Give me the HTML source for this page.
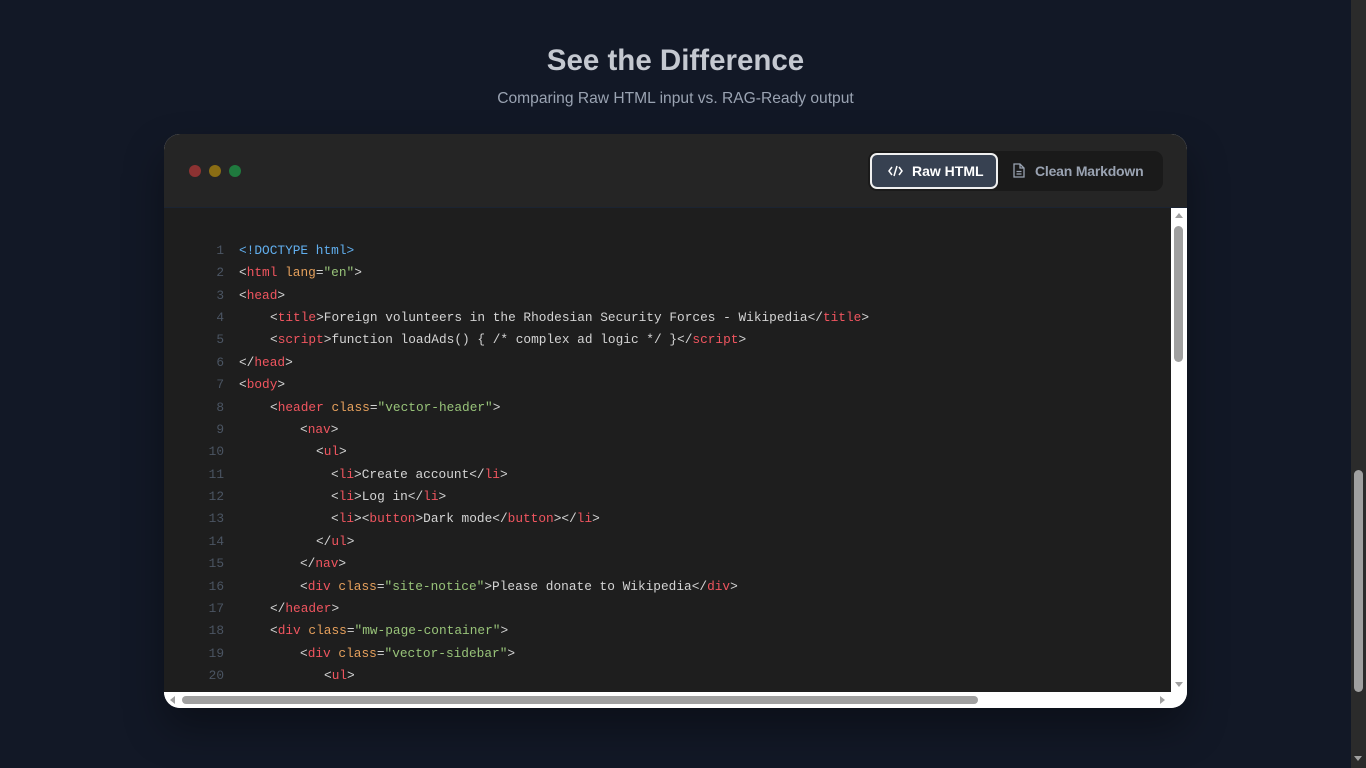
<!DOCTYPE html>
<html><head><style>
html,body{margin:0;padding:0;width:1366px;height:768px;overflow:hidden;background:#121826;font-family:"Liberation Sans",sans-serif}
h1{position:absolute;top:44px;left:0;width:1351px;text-align:center;margin:0;font-size:29.5px;color:#c4c8d0;font-weight:bold}
.sub{position:absolute;top:90px;left:0;width:1351px;text-align:center;font-size:15.6px;color:#9aa3b2}
.card{position:absolute;left:164px;top:134px;width:1023px;height:574px;border-radius:16px;background:#fff;overflow:hidden;box-shadow:0 20px 40px rgba(0,0,0,.35)}
.hdr{position:absolute;left:0;top:0;width:1023px;height:73px;background:#252525;border-bottom:1px solid #1b2433}
.dot{position:absolute;top:31px;width:12px;height:12px;border-radius:50%}
.tabs{position:absolute;left:704px;top:17px;width:295px;height:40px;background:#1a1a1a;border-radius:9px}
.t1{position:absolute;left:2px;top:2px;width:124px;height:32px;border:2px solid #f0f0f0;background:#374151;border-radius:7px;color:#fff;font-weight:bold;font-size:14px;line-height:32px}
.t2{position:absolute;top:4px;color:#9aa3b2;font-weight:bold;font-size:14px;line-height:32px;letter-spacing:-0.2px}
.code{position:absolute;left:0;top:74px;width:1007px;height:484px;background:#1e1e1e;overflow:hidden}
.ln{position:absolute;left:0;height:22px;font-family:"Liberation Mono",monospace;font-size:12.8px;line-height:22px;white-space:pre;color:#d4d4d4}
.n{position:absolute;width:60px;text-align:right;color:#4b5563}
.k{color:#f0555f}.a{color:#e5a05c}.s{color:#98c379}.d{color:#61afef}
.vs{position:absolute;left:1007px;top:74px;width:16px;height:484px;background:#fff}
.hs{position:absolute;left:0;top:558px;width:1023px;height:16px;background:#fff}
.pg{position:absolute;left:1351px;top:0;width:15px;height:768px;background:#2b2b2b}
</style></head><body>
<h1>See the Difference</h1>
<div class="sub">Comparing Raw HTML input vs. RAG-Ready output</div>
<div class="card">
<div class="hdr">
<div class="dot" style="left:25px;background:#8c3232"></div>
<div class="dot" style="left:45px;background:#8a6d14"></div>
<div class="dot" style="left:65px;background:#1f7a3e"></div>
<div class="tabs">
<div class="t1"><svg style="position:absolute;left:16px;top:9px" width="15" height="14" viewBox="0 0 15 14" fill="none" stroke="#fff" stroke-width="1.5"><path d="M4 3L1 7l3 4M11 3l3 4-3 4M9 2L6 12"/></svg><span style="position:absolute;left:40px">Raw HTML</span></div>
<svg style="position:absolute;left:145px;top:12px" width="12" height="15" viewBox="0 0 12 15" fill="none" stroke="#9aa3b2" stroke-width="1.3"><path d="M1 1h6l4 4v9H1z M7 1v4h4 M3.5 8.5h5 M3.5 11h5"/></svg>
<div class="t2" style="left:167px">Clean Markdown</div>
</div>
</div>
<div class="code" id="c"></div>
<div class="vs"><div style="position:absolute;left:4px;top:5px;border:4px solid transparent;border-bottom:5px solid #a0a0a0;border-top:0"></div><div style="position:absolute;left:3px;top:18px;width:9px;height:136px;border-radius:5px;background:#a0a0a0"></div><div style="position:absolute;left:4px;top:474px;border:4px solid transparent;border-top:5px solid #a0a0a0;border-bottom:0"></div></div>
<div class="hs"><div style="position:absolute;left:6px;top:4px;border:4px solid transparent;border-right:5px solid #a0a0a0;border-left:0"></div><div style="position:absolute;left:18px;top:4px;width:796px;height:8px;border-radius:4px;background:#a0a0a0"></div><div style="position:absolute;left:996px;top:4px;border:4px solid transparent;border-left:5px solid #a0a0a0;border-right:0"></div></div>
</div>
<div class="pg"><div style="position:absolute;left:3px;top:470px;width:9px;height:222px;border-radius:5px;background:#a0a0a0"></div><div style="position:absolute;left:3px;top:756px;border:4px solid transparent;border-top:5px solid #a0a0a0;border-bottom:0"></div></div>
<script>
var L=[
[0,'<span class="d">&lt;!DOCTYPE html&gt;</span>'],
[0,'&lt;<span class="k">html</span> <span class="a">lang</span>=<span class="s">"en"</span>&gt;'],
[0,'&lt;<span class="k">head</span>&gt;'],
[31,'&lt;<span class="k">title</span>&gt;Foreign volunteers in the Rhodesian Security Forces - Wikipedia&lt;/<span class="k">title</span>&gt;'],
[31,'&lt;<span class="k">script</span>&gt;function loadAds() { /* complex ad logic */ }&lt;/<span class="k">script</span>&gt;'],
[0,'&lt;/<span class="k">head</span>&gt;'],
[0,'&lt;<span class="k">body</span>&gt;'],
[31,'&lt;<span class="k">header</span> <span class="a">class</span>=<span class="s">"vector-header"</span>&gt;'],
[61,'&lt;<span class="k">nav</span>&gt;'],
[77,'&lt;<span class="k">ul</span>&gt;'],
[92,'&lt;<span class="k">li</span>&gt;Create account&lt;/<span class="k">li</span>&gt;'],
[92,'&lt;<span class="k">li</span>&gt;Log in&lt;/<span class="k">li</span>&gt;'],
[92,'&lt;<span class="k">li</span>&gt;&lt;<span class="k">button</span>&gt;Dark mode&lt;/<span class="k">button</span>&gt;&lt;/<span class="k">li</span>&gt;'],
[77,'&lt;/<span class="k">ul</span>&gt;'],
[61,'&lt;/<span class="k">nav</span>&gt;'],
[61,'&lt;<span class="k">div</span> <span class="a">class</span>=<span class="s">"site-notice"</span>&gt;Please donate to Wikipedia&lt;/<span class="k">div</span>&gt;'],
[31,'&lt;/<span class="k">header</span>&gt;'],
[31,'&lt;<span class="k">div</span> <span class="a">class</span>=<span class="s">"mw-page-container"</span>&gt;'],
[61,'&lt;<span class="k">div</span> <span class="a">class</span>=<span class="s">"vector-sidebar"</span>&gt;'],
[85,'&lt;<span class="k">ul</span>&gt;']];
var h='';L.forEach(function(l,i){h+='<div class="ln" style="top:'+(165+i*22.37-74-11-48)+'px;left:'+(75+l[0])+'px"><span class="n" style="left:'+(-l[0]-75)+'px">'+(i+1)+'</span>'+l[1]+'</div>';});
document.getElementById('c').innerHTML=h;
</script>
</body></html>
